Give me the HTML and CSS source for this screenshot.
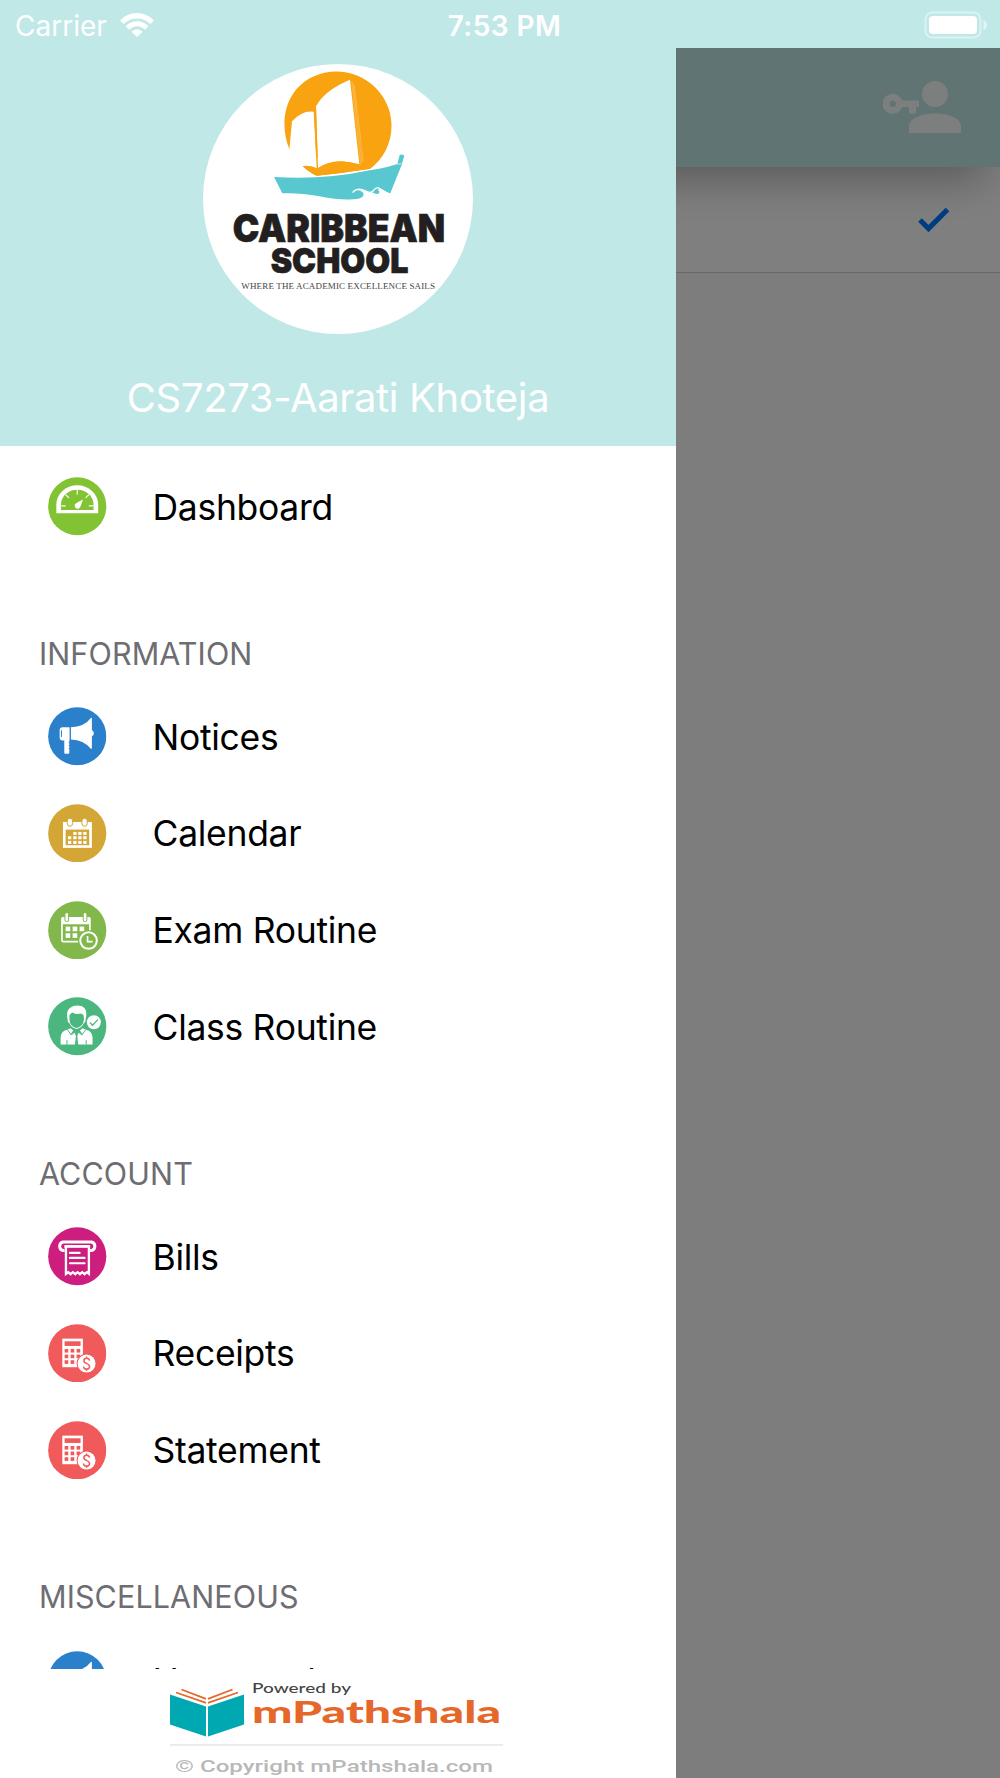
FILE: index.html
```html
<!DOCTYPE html>
<html lang="en">
<head>
    <meta charset="UTF-8">
    <meta name="viewport" content="width=device-width, initial-scale=1.0">
    <title>mPathshala</title>
    <link rel="stylesheet" href="styles.css">
</head>
<body>
    <!-- shared icons -->
    <svg class="sprite" width="0" height="0">
        <symbol id="icon-notice" viewBox="0 0 176 176">
            <circle cx="88" cy="88" r="87.5" fill="#2a80cb"/>
            <path fill="#fff" d="M44 61h21v39h-1v38q0 3-3 3h-9q-3 0-3-3v-37h-5q-9 0-9-9V70q0-9 9-9z"/>
            <path fill="#fff" d="M69 61q40-1 60-28q3-2 3 2v34q6 4 6 10t-6 10v34q0 4-4 2q-20-25-59-27z"/>
            <path d="M40.500 70v20" stroke="#2a80cb" stroke-width="3"/>
            <path d="M62 107h4M62 116h4M62 125h4" stroke="#2a80cb" stroke-width="2"/>
        </symbol>
        <symbol id="icon-calc" viewBox="0 0 176 176">
            <circle cx="88" cy="88" r="87.500" fill="#f05a5b"/>
            <rect x="43" y="44" width="62" height="86" fill="#fff"/>
            <g fill="#f05a5b">
                <rect x="50" y="52" width="48" height="14"/>
                <rect x="50" y="75" width="11" height="11"/><rect x="68" y="75" width="11" height="11"/><rect x="86" y="75" width="11" height="11"/>
                <rect x="50" y="92" width="11" height="11"/><rect x="68" y="92" width="11" height="11"/><rect x="86" y="92" width="11" height="11"/>
                <rect x="50" y="109" width="11" height="11"/><rect x="68" y="109" width="11" height="11"/>
                <circle cx="116" cy="119" r="30"/>
            </g>
            <circle cx="116" cy="119" r="27" fill="#fff"/>
            <path d="M125 110q-1-7-9-7t-8 7q0 6 8 8.500t9 9q0 8-9 8t-9-8M116 98v6M116 135v6" fill="none" stroke="#f05a5b" stroke-width="4.500"/>
        </symbol>
    </svg>

    <div class="screen">
        <div class="status-bar">
            <div class="status-left">
                <span class="carrier">Carrier</span>
                <svg class="wifi" viewBox="0 0 34 24">
                    <path fill="#fff" d="M0 7.500Q7 0 17 0t17 7.500l-3.600 3.600Q25 5.500 17 5.500T3.600 11.100zM5.600 13.200Q10.500 8.200 17 8.200t11.400 5l-3.500 3.500Q21.500 13.200 17 13.200t-7.900 3.500zM11.500 18.800Q14 16.300 17 16.300t5.500 2.500L17 24z"/>
                </svg>
            </div>
            <span class="clock">7:53 PM</span>
            <svg class="battery" viewBox="0 0 64 28">
                <rect x="1.500" y="1.500" width="55" height="25" rx="7" fill="none" stroke="#fff" stroke-opacity=".45" stroke-width="2"/>
                <rect x="5" y="5" width="48" height="18" rx="4" fill="#fff"/>
                <path d="M59.500 9q3.500 1.500 3.500 5t-3.500 5z" fill="#fff" fill-opacity=".5"/>
            </svg>
        </div>

        <div class="main">
            <div class="page">
                <div class="toolbar">
                    <svg class="account-key" viewBox="0 0 78 52">
                        <g fill="#fafeff">
                            <circle cx="52" cy="13" r="13"/>
                            <path d="M26 52v-7c0-8 14-12.500 26-12.500S78 37 78 45v7z"/>
                            <path fill-rule="evenodd" d="M19 19.500h17V26h-3v6.500h-7V26h-7a10 10 0 1 1 0-6.500zM9.800 19.500a3.300 3.300 0 1 0 .01 0z"/>
                        </g>
                    </svg>
                </div>
                <div class="student-row">
                    <svg class="check" viewBox="0 0 32 26">
                        <path d="M2 13l8.500 8.500L29.500 2.500" fill="none" stroke="#007aff" stroke-width="5.200"/>
                    </svg>
                </div>
            </div>
            <div class="backdrop"></div>

            <div class="drawer">
                <div class="profile">
                    <svg class="school-logo" viewBox="40 41 810 810">
                        <circle cx="445" cy="446" r="405" fill="#fff"/>
                        <path fill="#f9a310" d="M299 297C263 205 295 110 375 77C470 36 575 92 600 184C618 255 590 320 542 355Q460 368 381 376Q356 365 339 347Q360 343 383 354Q400 338 430 334L299 297z"/>
                        <path fill="#fff" d="M299 298L307 213Q338 179 372 184L381 352Q365 346 340 346L318 330z"/>
                        <path fill="#fff" d="M379 168Q405 119 481 88L509 342Q440 321 385 352z"/>
                        <path fill="#f9a310" d="M373 180L379 165L385 354L381 354z"/>
                        <path fill="#f9a310" d="M339 347Q362 344 384 355Q430 317 509 343L542 355Q460 368 381 376Q356 365 339 347z"/>
                        <path stroke="#fff" stroke-width="1.200" fill="none" opacity=".55" d="M486 92L513 342M490 96L517 338M494 104L521 334"/>
                        <path fill="#59c7cf" d="M253 380Q400 390 540 360Q590 352 623 341L630 314Q637 310 644 316L635 346L601 431Q588 422 577 418Q570 414 564 419Q572 423 568 429Q561 434 553 428Q543 424 535 424Q515 414 489 426Q500 420 512 422Q524 426 521 436Q515 446 490 447Q450 450 390 438Q330 427 278 429z"/>
                        <path stroke="#fff" stroke-width="4" fill="none" d="M489 427Q502 409 530 423Q542 430 551 421Q561 406 574 417Q588 428 601 431"/>
                        <path stroke="#fff" stroke-width="2" fill="none" d="M623 342L635 340"/>
                        <g class="logo-name">
                            <text x="129" y="575" font-size="115" textLength="637" lengthAdjust="spacingAndGlyphs">CARIBBEAN</text>
                            <text x="243" y="667" font-size="103" textLength="413" lengthAdjust="spacingAndGlyphs">SCHOOL</text>
                        </g>
                        <text class="logo-motto" x="155" y="716" textLength="581">WHERE THE ACADEMIC EXCELLENCE SAILS</text>
                    </svg>
                    <div class="student-name">CS7273-Aarati Khoteja</div>
                </div>

                <div class="menu">
                    <div class="menu-item">
                        <svg class="menu-icon" viewBox="0 0 176 176">
                            <circle cx="88" cy="88" r="87.500" fill="#82c333"/>
                            <path fill="#fff" d="M25 109V83a63 58 0 0 1 126 0v26z"/>
                            <path fill="#82c333" d="M39 99V84a49 46 0 0 1 98 0v15z"/>
                            <path stroke="#fff" stroke-width="3.500" d="M88 36v17M53 53l10 10M123 53l-10 10M40 87h13M123 87h14"/>
                            <path fill="#fff" d="M105 68q-4 14-8 22q-4 8-12 5q-7-5-4-12q2-4 24-15z"/>
                        </svg>
                        <span>Dashboard</span>
                    </div>

                    <div class="menu-heading">INFORMATION</div>
                    <div class="menu-item">
                        <svg class="menu-icon"><use href="#icon-notice"/></svg>
                        <span>Notices</span>
                    </div>
                    <div class="menu-item">
                        <svg class="menu-icon" viewBox="0 0 176 176">
                            <circle cx="88" cy="88" r="87.500" fill="#d4a636"/>
                            <path fill="#fff" d="M45 54h87v78H45z"/>
                            <path fill="#d4a636" d="M53 77h71v47H53z"/>
                            <g fill="#fff" stroke="#d4a636" stroke-width="3">
                                <rect x="58" y="43" width="16" height="24" rx="8"/>
                                <rect x="102" y="43" width="16" height="24" rx="8"/>
                            </g>
                            <g fill="#fff">
                                <rect x="76" y="84" width="10" height="9"/><rect x="91" y="84" width="10" height="9"/><rect x="106" y="84" width="10" height="9"/>
                                <rect x="60" y="97" width="10" height="9"/><rect x="76" y="97" width="10" height="9"/><rect x="91" y="97" width="10" height="9"/><rect x="106" y="97" width="10" height="9"/>
                                <rect x="60" y="111" width="10" height="9"/><rect x="76" y="111" width="10" height="9"/><rect x="91" y="111" width="10" height="9"/><rect x="106" y="111" width="10" height="9"/>
                            </g>
                        </svg>
                        <span>Calendar</span>
                    </div>
                    <div class="menu-item">
                        <svg class="menu-icon" viewBox="0 0 176 176">
                            <circle cx="88" cy="88" r="87.500" fill="#82b84b"/>
                            <rect x="42" y="51" width="84" height="71" rx="3" fill="none" stroke="#fff" stroke-width="5"/>
                            <path fill="#fff" d="M41 50h86v20H41z"/>
                            <g fill="#fff" stroke="#82b84b" stroke-width="3">
                                <rect x="51" y="35" width="11" height="27" rx="5"/>
                                <rect x="106" y="35" width="11" height="27" rx="5"/>
                            </g>
                            <g fill="#fff">
                                <rect x="53" y="77" width="14" height="14"/><rect x="74" y="77" width="14" height="14"/><rect x="95" y="77" width="14" height="14"/>
                                <rect x="53" y="97" width="14" height="14"/><rect x="74" y="97" width="14" height="14"/>
                            </g>
                            <circle cx="122" cy="119" r="32" fill="#82b84b"/>
                            <circle cx="122" cy="119" r="25" fill="none" stroke="#fff" stroke-width="6"/>
                            <path d="M119 105v17h15" fill="none" stroke="#fff" stroke-width="5"/>
                        </svg>
                        <span>Exam Routine</span>
                    </div>
                    <div class="menu-item">
                        <svg class="menu-icon" viewBox="0 0 176 176">
                            <circle cx="88" cy="88" r="87.500" fill="#4bb77e"/>
                            <path fill="#fff" d="M59 67q-6-25 8-35q12-9 34-5q13 7 14 20q1 10-2 21q1 9-6 12q-7 15-21 16q-14-1-21-16q-7-4-6-13z"/>
                            <path fill="#4bb77e" d="M65 54q4-6 10-7q5 6 15 4q12-4 17 4q3 15-2 25q-9 13-19 13t-19-13q-4-11-2-26z"/>
                            <path fill="#fff" d="M68 94l8 7l-10 13l14-8l4 12l-3 25H38v-23q2-18 18-21zM104 94l-8 7l10 13l-14-8l-4 12l3 25h43v-23q-2-18-18-21z"/>
                            <path d="M57 130v13M115 130v13M59 99l11 15l12-9M113 99l-11 15l-12-9" fill="none" stroke="#4bb77e" stroke-width="3"/>
                            <circle cx="138" cy="76" r="21" fill="#fff"/>
                            <path d="M126 77l8 8l16-17" fill="none" stroke="#4bb77e" stroke-width="4"/>
                        </svg>
                        <span>Class Routine</span>
                    </div>

                    <div class="menu-heading">ACCOUNT</div>
                    <div class="menu-item">
                        <svg class="menu-icon" viewBox="0 0 176 176">
                            <circle cx="88" cy="88" r="87.500" fill="#cd1d7f"/>
                            <path d="M50 71h-5q-10-3-10-13t10-13h86q10 3 10 13t-10 13h-5" fill="none" stroke="#fff" stroke-width="9"/>
                            <path d="M54 58v83l7-5l7 6l7-6l7 6l7-6l7 6l7-6l7 6l7-6l6 5V58z" fill="none" stroke="#fff" stroke-width="7"/>
                            <path d="M49 59h78" stroke="#fff" stroke-width="6"/>
                            <path d="M66 78h29M66 93h44M66 109h44" stroke="#fff" stroke-width="6.500" stroke-linecap="round"/>
                        </svg>
                        <span>Bills</span>
                    </div>
                    <div class="menu-item">
                        <svg class="menu-icon"><use href="#icon-calc"/></svg>
                        <span>Receipts</span>
                    </div>
                    <div class="menu-item">
                        <svg class="menu-icon"><use href="#icon-calc"/></svg>
                        <span>Statement</span>
                    </div>

                    <div class="menu-heading">MISCELLANEOUS</div>
                    <div class="menu-item tight">
                        <svg class="menu-icon"><use href="#icon-notice"/></svg>
                        <span>Homework</span>
                    </div>
                </div>

                <div class="drawer-footer">
                    <svg class="powered" viewBox="0 0 334 109">
                        <g fill="#00a8b2">
                            <path d="M0 25.500L36 37.500V67.500L0 55.500z"/>
                            <path d="M74 25.500L38 37.500V67.500L74 55.500z"/>
                        </g>
                        <path d="M6 23.500L36 33.800M11.500 20.500L36 29.800M68 23.500L38 33.800M62.500 20.500L38 29.800" stroke="#e5672a" stroke-width="1.800" fill="none"/>
                        <text class="powered-by" x="82" y="23.500" textLength="99" lengthAdjust="spacingAndGlyphs">Powered by</text>
                        <text class="powered-brand" x="82" y="54" textLength="249" lengthAdjust="spacingAndGlyphs">mPathshala</text>
                        <rect x="0" y="75" width="333" height="1.800" fill="#eaeaea"/>
                        <text class="copyright" x="5" y="103" textLength="318" lengthAdjust="spacingAndGlyphs">© Copyright mPathshala.com</text>
                    </svg>
                </div>
            </div>
        </div>
    </div>
</body>
</html>
```
FILE: styles.css
```css
body {
    margin: 0;
    font-family: Inter, "Liberation Sans", sans-serif;
    background-color: #7d7d7d;
}

.sprite {
    display: block;
}

.screen {
    width: 1000px;
    height: 1778px;
    display: flex;
    flex-direction: column;
    overflow: hidden;
}

.status-bar {
    height: 48px;
    flex-shrink: 0;
    padding: 0 12px 0 15px;
    box-sizing: border-box;
    display: grid;
    grid-template-columns: 1fr auto 1fr;
    align-items: center;
    background-color: #c0e8e7;
    color: #fff;
}

.status-left {
    display: flex;
    align-items: center;
    gap: 13px;
}

.carrier {
    font-size: 28px;
    line-height: 48px;
    padding-top: 2px;
}

.wifi {
    width: 34px;
    height: 24px;
}

.clock {
    font-size: 28px;
    font-weight: 600;
    letter-spacing: 0.45px;
    padding: 2px 0 0 6px;
}

.battery {
    width: 64px;
    height: 28px;
    justify-self: end;
}

.main {
    position: relative;
    flex: 1;
    overflow: hidden;
}

.page {
    height: 100%;
    background-color: #fafafa;
}

.toolbar {
    position: relative;
    height: 119px;
    padding: 0 39px 1px 0;
    box-sizing: border-box;
    display: flex;
    justify-content: flex-end;
    align-items: center;
    background-color: #c0e8e7;
    box-shadow: 0 26px 44px -14px rgba(0, 0, 0, 0.3);
}

.account-key {
    width: 78px;
    height: 52px;
}

.student-row {
    height: 106px;
    padding-right: 50px;
    box-sizing: border-box;
    display: flex;
    justify-content: flex-end;
    align-items: center;
    background-color: #fff;
    border-bottom: 1px solid #d0d0d0;
}

.check {
    width: 32px;
    height: 26px;
}

.backdrop {
    position: absolute;
    inset: 0;
    background-color: rgba(0, 0, 0, 0.5);
}

/* side menu */
.drawer {
    position: absolute;
    top: 0;
    left: 0;
    bottom: 0;
    width: 676px;
    display: flex;
    flex-direction: column;
    background-color: #fff;
}

.profile {
    height: 398px;
    flex-shrink: 0;
    padding-top: 16px;
    box-sizing: border-box;
    display: flex;
    flex-direction: column;
    align-items: center;
    background-color: #c0e8e7;
}

.school-logo {
    width: 270px;
    height: 270px;
}

.logo-name {
    font-family: Inter, "Liberation Sans", sans-serif;
    font-weight: 900;
    fill: #231f20;
    stroke: #231f20;
    stroke-width: 2px;
}

.logo-motto {
    font-family: "Liberation Serif", serif;
    font-size: 27px;
    fill: #444;
}

.student-name {
    margin-top: 40px;
    font-size: 40px;
    line-height: 48px;
    letter-spacing: -0.35px;
    color: #fff;
}

.menu {
    flex: 1;
    min-height: 0;
    overflow: hidden;
    padding-top: 12.3px;
}

.menu-item {
    height: 96.67px;
    padding-left: 48px;
    display: flex;
    align-items: center;
    gap: 46px;
    font-size: 35.5px;
    letter-spacing: -0.3px;
    color: #000;
}

.menu-item span {
    padding-top: 1px;
}

.menu-item.tight {
    letter-spacing: -1.1px;
}

.menu-item.tight span {
    padding-top: 4px;
}

.menu-icon {
    width: 58.5px;
    height: 58.5px;
    flex-shrink: 0;
}

.menu-heading {
    height: 133.3px;
    padding: 64px 0 0 39px;
    box-sizing: border-box;
    font-size: 30.5px;
    line-height: 70px;
    letter-spacing: 0.1px;
    color: #6d6d72;
}

.drawer-footer {
    height: 109px;
    flex-shrink: 0;
    padding-left: 170px;
}

.powered {
    display: block;
    width: 334px;
    height: 109px;
}

.powered-by {
    font-family: Lato, sans-serif;
    font-size: 13.5px;
    font-weight: 500;
    fill: #444;
}

.powered-brand {
    font-family: Lato, sans-serif;
    font-size: 31px;
    font-weight: 900;
    fill: #e5672a;
}

.copyright {
    font-family: Roboto, sans-serif;
    font-size: 17px;
    font-weight: 500;
    fill: #b8b8b8;
}
```
